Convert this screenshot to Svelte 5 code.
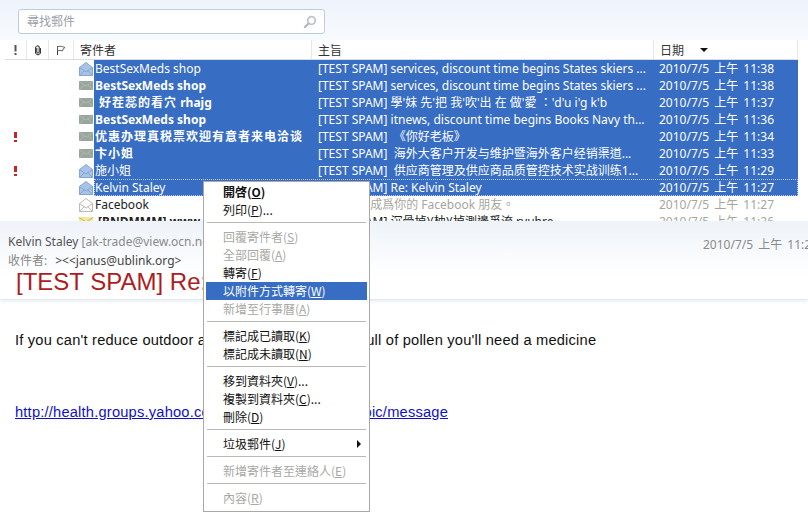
<script>
  const rows = [
    { icon: 'open', sender: 'BestSexMeds shop', subject: '[TEST SPAM] services, discount time begins States skiers ...', date: '2010/7/5 上午 11:38', sel: true },
    { icon: 'closed', bold: true, sender: 'BestSexMeds shop', subject: '[TEST SPAM] services, discount time begins States skiers ...', date: '2010/7/5 上午 11:38', sel: true },
    { icon: 'closed', bold: true, wide: ' 好茬蕊的看穴', sender: ' rhajg', subject: "[TEST SPAM] 學'妹 先'把 我'吹'出 在 做'愛 ：'d'u i'g k'b", date: '2010/7/5 上午 11:37', sel: true },
    { icon: 'closed', bold: true, sender: 'BestSexMeds shop', subject: '[TEST SPAM] itnews, discount time begins Books Navy th...', date: '2010/7/5 上午 11:36', sel: true },
    { icon: 'closed', bold: true, wide: '优惠办理真税票欢迎有意者来电洽谈', pri: true, sender: '', subject: '[TEST SPAM]  《你好老板》', date: '2010/7/5 上午 11:34', sel: true },
    { icon: 'closed', bold: true, wide: '卞小姐', sender: '', subject: '[TEST SPAM]  海外大客户开发与维护暨海外客户经销渠道...', date: '2010/7/5 上午 11:33', sel: true },
    { icon: 'open', pri: true, sender: '施小姐', subject: '[TEST SPAM]  供应商管理及供应商品质管控技术实战训练1...', date: '2010/7/5 上午 11:29', sel: true },
    { icon: 'open', sender: 'Kelvin Staley', subject: '[TEST SPAM] Re: Kelvin Staley', date: '2010/7/5 上午 11:27', sel: true, focus: true },
    { icon: 'white', sender: 'Facebook', subject: 'Kelvin  想成爲你的 Facebook 朋友。', date: '2010/7/5 上午 11:27', muted: true },
    { icon: 'yellow', bold: true, sender: ' [RNDMMM] www.ui', subject: '[TEST SPAM] 沉骨掉)(柚)(掉測邊爭流 ryuhre', date: '2010/7/5 上午 11:26', muted: true, last: true }
  ];
  const menu = [
    [{ t: '開啓', k: 'O', b: true }, { t: '列印', k: 'P', s: '...' }],
    [{ t: '回覆寄件者', k: 'S', d: true }, { t: '全部回覆', k: 'A', d: true }, { t: '轉寄', k: 'F' }, { t: '以附件方式轉寄', k: 'W', h: true }, { t: '新增至行事曆', k: 'A', d: true }],
    [{ t: '標記成已讀取', k: 'K' }, { t: '標記成未讀取', k: 'N' }],
    [{ t: '移到資料夾', k: 'V', s: '...' }, { t: '複製到資料夾', k: 'C', s: '...' }, { t: '刪除', k: 'D' }],
    [{ t: '垃圾郵件', k: 'J', sub: true }],
    [{ t: '新增寄件者至連絡人', k: 'E', d: true }],
    [{ t: '內容', k: 'R', d: true }]
  ];
</script>

<div class="page">
  <div class="top">
    <div class="search">
      <span>尋找郵件</span>
      <svg width="14" height="14" viewBox="0 0 14 14"><circle cx="8.500" cy="5.500" r="3.800" fill="#fff" stroke="#c0c3c6" stroke-width="1.800"/><path d="M5.500 8.500 2 12" stroke="#b4b8bc" stroke-width="2.400" stroke-linecap="round"/></svg>
    </div>
  </div>

  <div class="head">
    <div class="h c1"><svg width="3" height="10" viewBox="0 0 3 10"><path d="M.5 0h2v6.500h-2zM.5 8h2v2h-2z" fill="#555"/></svg></div>
    <div class="h c2"><svg width="6" height="11" viewBox="0 0 6 11"><path d="M1.800 3V7.500Q3 8.800 4.200 7.500V1.500Q3 .3 1.500 1.200 .6 1.700 .6 3V8.500Q3 11.500 5.400 8.500V3" fill="none" stroke="#222"/></svg></div>
    <div class="h c3"><svg width="10" height="11" viewBox="0 0 10 11"><path d="M1.500 1v9" stroke="#444" fill="none"/><path d="M1.500 1.500Q5 .5 9 2.500 6.500 3.500 6.500 6 4 4.500 1.500 6z" fill="#fff" stroke="#555" stroke-width=".9"/></svg></div>
    <div class="h c4">寄件者</div>
    <div class="h c5">主旨</div>
    <div class="h c6">日期<i class="arrow"></i></div>
  </div>

  <div class="list">
    {#each rows as r}
      <div class="row" class:bold={r.bold} class:sel={r.sel} class:muted={r.muted} class:focus={r.focus} class:last={r.last}>
        <div class="flag">
          {#if r.pri}<svg width="3" height="10" viewBox="0 0 3 10"><path d="M0 0h3v6H0zM0 8h3v2H0z" fill="#c8232c"/></svg>{/if}
        </div>
        <div class="ico">
          {#if r.icon === 'closed' || r.icon === 'yellow'}
            <svg width="14" height="9" viewBox="0 0 14 9" class={r.icon}><rect class="bg" width="14" height="9"/><path class="ln" d="M0 .5 7 5 14 .5M0 9 5 3.800M14 9 9 3.800"/></svg>
          {:else}
            <svg width="14" height="14" viewBox="0 0 14 14" class={r.icon}><path class="bk" d="M.5 5.500 7 .5l6.500 5v8H.5z"/><path class="ln" d="M.5 5.500 7 .5l6.500 5v8H.5zM.5 5.500 7 10l6.500-4.500M.5 13.500 5.500 8.500M13.500 13.500 8.500 8.500"/></svg>
          {/if}
        </div>
        <div class="cells">
          <div class="sender">{#if r.wide}<span class="wide">{r.wide}</span>{/if}{r.sender}</div>
          <div class="subject">{r.subject}</div>
          <div class="date">{r.date}</div>
        </div>
      </div>
    {/each}
  </div>

  <div class="preview">
    <div class="who">
      <span class="name">Kelvin Staley</span> <span class="addr">[ak-trade@view.ocn.ne.jp]</span>
      <span class="when">2010/7/5 上午 11:27</span>
    </div>
    <div class="to"><span>收件者:</span>&gt;&lt;&lt;janus@ublink.org&gt;</div>
    <div class="title">[TEST SPAM] Re: Kelvin Staley</div>
  </div>

  <div class="body">
    <p class="para">If you can't reduce outdoor activities when the air is full of pollen you'll need a medicine</p>
    <a class="link" href="#top">http://health.groups.yahoo.com/group/allergy_info/topic/message</a>
  </div>

  <div class="menu">
    {#each menu as group, i}
      {#if i > 0}<div class="sep"></div>{/if}
      {#each group as m}
        <div class="item" class:dis={m.d} class:hi={m.h} class:strong={m.b}>
          <span>{m.t}(<u>{m.k}</u>){m.s ?? ''}</span>
          {#if m.sub}<i class="caret"></i>{/if}
        </div>
      {/each}
    {/each}
  </div>
</div>

<style>
  :global(body) { margin: 0; background: #fff; }
  .page {
    position: relative; width: 808px; height: 529px; overflow: hidden; background: #fff;
    font: 12px/17px "Noto Sans", "Noto Sans CJK TC", sans-serif; color: #222;
  }
  .top { height: 40px; padding: 9px 0 0 18px; box-sizing: border-box; background: linear-gradient(#eef3fb, #f8fbfe); }
  .search {
    width: 307px; height: 25px; box-sizing: border-box; display: flex; align-items: center; justify-content: space-between;
    padding: 0 7px 0 8px; background: #fff; border: 1px solid #bccbde; border-radius: 3px; color: #9aa0a8; font-size: 12px;
  }
  .head { height: 20px; display: flex; margin-left: 5px; width: 793px; border-bottom: 1px solid #d8dde3; box-sizing: border-box; background: #fff; }
  .h { border-right: 1px solid #e6e8ec; box-sizing: border-box; display: flex; align-items: center; padding-top: 1px; color: #333; font-size: 12px; }
  .c1 { width: 22px; justify-content: center; }
  .c2 { width: 22px; justify-content: center; }
  .c3 { width: 25px; justify-content: center; }
  .c4 { width: 238px; padding-left: 6px; }
  .c5 { width: 342px; padding-left: 6px; }
  .c6 { width: 144px; padding-left: 6px; }
  .arrow { width: 0; height: 0; margin-left: 16px; border: 4px solid transparent; border-top-color: #111; border-bottom: 0; }
  .list { height: 161px; overflow: hidden; box-shadow: 0 1px 2px #d6dde6; position: relative; background: #fff; }
  .row { height: 17px; display: flex; white-space: pre; }
  .flag { width: 79px; flex: none; padding-left: 14px; box-sizing: border-box; display: flex; align-items: center; }
  .ico { width: 15px; flex: none; display: flex; align-items: center; }
  .ico .bg { fill: #98a69b; }
  .ico .ln { fill: none; stroke: #aeb9af; }
  .ico .bk { fill: #a9c3e8; }
  .ico .open .ln { stroke: #86a6d2; }
  .ico .white .bk { fill: #fdfdfd; }
  .ico .white .ln { stroke: #bcbcb5; }
  .ico .yellow .bg { fill: #f6e59a; }
  .ico .yellow .ln { stroke: #c9b45c; }
  .cells { display: flex; width: 704px; box-sizing: border-box; }
  .sender { width: 224px; padding-left: 1px; box-sizing: border-box; overflow: hidden; }
  .subject { width: 341px; box-sizing: border-box; overflow: hidden; }
  .date { width: 139px; box-sizing: border-box; word-spacing: 2px; }
  .bold .sender { font-weight: 700; }
  .wide { letter-spacing: 1px; }
  .sel .cells { background: #376dc3; color: #fff; }
  .focus .cells { outline: 1px dotted #b9cbe8; outline-offset: -1px; }
  .muted .subject, .muted .date { color: #a8a69c; }
  .last .subject { color: #222; }
  .preview {
    height: 79px; box-sizing: border-box; padding: 12px 0 0 8px; position: relative;
    background: linear-gradient(#eef3f9, #fff 70%); border-bottom: 1px solid #e3e8ee; box-shadow: 0 2px 3px #eef1f5;
  }
  .who { position: relative; color: #555; }
  .addr { color: #8a8a8a; }
  .when { position: absolute; left: 695px; top: 3px; color: #8a8a8a; white-space: nowrap; word-spacing: 2px; }
  .to { margin-top: 2px; color: #444; }
  .to span { color: #888; margin-right: 8px; }
  .title { margin: -2px 0 0 8px; font: 24px/30px "Liberation Sans", "Noto Sans CJK TC", sans-serif; color: #ad1c22; }
  .body { padding: 30px 0 0 15px; font: 14.67px/20px "Liberation Sans", sans-serif; letter-spacing: .2px; color: #111; }
  .para { margin: 0; }
  .link { display: inline-block; margin-top: 52px; color: #1010c8; }
  .menu {
    position: absolute; left: 203px; top: 181px; width: 167px; height: 331px; box-sizing: border-box; padding: 1px 2px;
    background: #fff; border: 1px solid #a8a8a4; font: 12px/18px "Noto Sans CJK TC", sans-serif; color: #111;
  }
  .item { height: 18px; padding-left: 17px; position: relative; white-space: nowrap; }
  .item u { text-decoration: underline; }
  .strong { font-weight: 700; }
  .dis { color: #a8a8a4; }
  .hi { background: #376dc3; color: #fff; }
  .sep { height: 1px; background: #b8b8b4; margin: 3px 1px 5px 1px; }
  .caret { position: absolute; right: 6px; top: 5px; width: 0; height: 0; border: 4px solid transparent; border-left-color: #111; border-right: 0; }
</style>
